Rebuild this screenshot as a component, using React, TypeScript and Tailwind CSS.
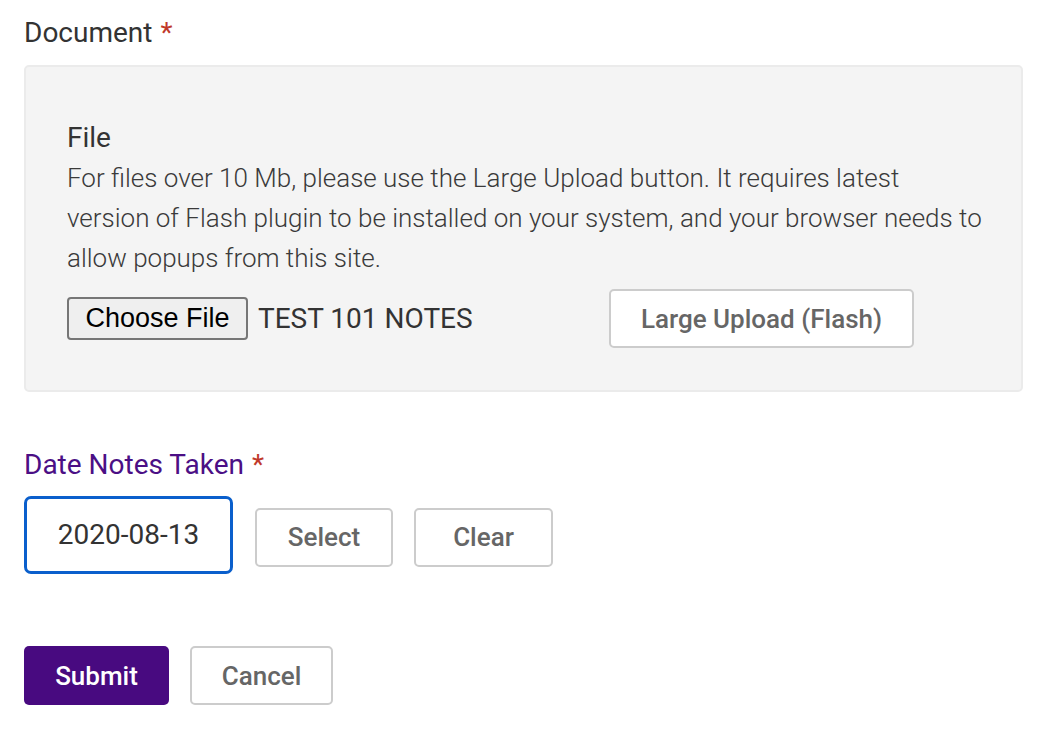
import { ReactNode } from "react";

function Required() {
  return <span className="ml-2 text-[#c0392b]">*</span>;
}

function OutlineButton({ children, className }: { children: ReactNode; className?: string }) {
  return (
    <button
      type="button"
      className={
        "flex items-center justify-center rounded-[5px] border-2 border-[#cccccc] bg-white text-[26px] font-medium text-[#666666] " +
        (className ?? "")
      }
    >
      {children}
    </button>
  );
}

export default function App() {
  return (
    <div className="min-h-screen bg-white px-6 pt-[13px] font-['Roboto',sans-serif] text-[28px] leading-[40px] text-[#333333]">
      <div>
        Document
        <Required />
      </div>

      <div className="mt-3 w-[999px] rounded-[5px] border-2 border-[#ebebeb] bg-[#f4f4f4] px-[41px] pb-[42px] pt-[51px]">
        <div>File</div>
        <p className="whitespace-nowrap text-[26px] font-light text-[#3a3a3a]">
          For files over 10 Mb, please use the Large Upload button. It requires latest
          <br />
          version of Flash plugin to be installed on your system, and your browser needs to
          <br />
          allow popups from this site.
        </p>
        <div className="mt-[11px] flex items-center">
          <div className="flex w-[542px] items-center">
            <button
              type="button"
              className="h-[43px] w-[181px] rounded-[4px] border-2 border-[#767676] bg-[#efefef] font-['Liberation_Sans',sans-serif] text-[27px] leading-none text-black"
            >
              Choose File
            </button>
            <span className="ml-[10px]">TEST 101 NOTES</span>
          </div>
          <OutlineButton className="h-[59px] w-[305px]">Large Upload (Flash)</OutlineButton>
        </div>
      </div>

      <div className="mt-[53px] text-[#4b0f85]">
        Date Notes Taken
        <Required />
      </div>

      <div className="mt-[11px] flex items-center gap-[21px]">
        <div className="flex h-[78px] w-[209px] items-center justify-center rounded-[7px] border-[3px] border-[#0a5fcc] bg-white">
          2020-08-13
        </div>
        <OutlineButton className="ml-px mt-1 h-[59px] w-[138px]">Select</OutlineButton>
        <OutlineButton className="mt-1 h-[59px] w-[139px]">Clear</OutlineButton>
      </div>

      <div className="mt-[72px] flex gap-[21px]">
        <button
          type="button"
          className="h-[59px] w-[145px] rounded-[5px] bg-[#480a80] text-[26px] font-medium text-white"
        >
          Submit
        </button>
        <OutlineButton className="h-[59px] w-[143px]">Cancel</OutlineButton>
      </div>
    </div>
  );
}
